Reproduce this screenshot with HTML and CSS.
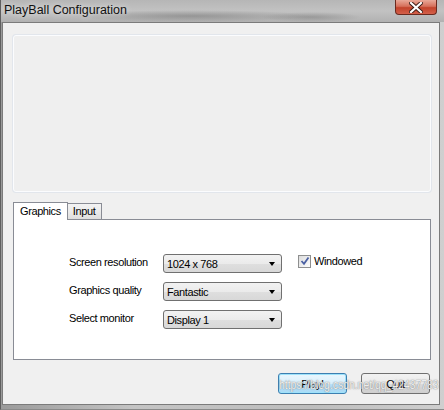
FILE: index.html
```html
<!DOCTYPE html>
<html lang="en">
<head>
  <meta charset="UTF-8" />
  <title>PlayBall Configuration</title>
  <link rel="stylesheet" href="styles.css">
</head>
<body>
  <div class="window">
    <div class="titlebar">
      <span class="title">PlayBall Configuration</span>
      <div class="close-btn">
        <svg width="14" height="11" viewBox="0 0 14 11">
          <path d="M2 1 L12 10 M12 1 L2 10" stroke="#3a1a14" stroke-width="4" stroke-linecap="square"/>
          <path d="M2 1 L12 10 M12 1 L2 10" stroke="#ffffff" stroke-width="2.2" stroke-linecap="square"/>
        </svg>
      </div>
    </div>

    <div class="client">
      <!-- banner picture area (empty) -->
      <div class="banner"></div>

      <div class="tabs">
        <div class="tab active">Graphics</div>
        <div class="tab">Input</div>
      </div>

      <div class="tab-panel">
        <div class="settings">
          <div class="row">
            <span class="label">Screen resolution</span>
            <div class="combo"><span>1024 x 768</span><i class="arrow"></i></div>
            <label class="check">
              <span class="box">
                <svg width="10" height="10" viewBox="0 0 10 10">
                  <path d="M1.5 5 L4 7.8 L8.5 1.5" fill="none" stroke="#4b61a3" stroke-width="1.8"/>
                </svg>
              </span>
              Windowed
            </label>
          </div>
          <div class="row">
            <span class="label">Graphics quality</span>
            <div class="combo"><span>Fantastic</span><i class="arrow"></i></div>
          </div>
          <div class="row">
            <span class="label">Select monitor</span>
            <div class="combo"><span>Display 1</span><i class="arrow"></i></div>
          </div>
        </div>
      </div>

      <div class="buttons">
        <button class="btn default">Play!</button>
        <button class="btn">Quit</button>
      </div>
    </div>

    <div class="watermark">https://blog.csdn.net/qq_42437783</div>
  </div>
</body>
</html>
```

FILE: styles.css
```css
body {
  margin: 0;
  background: #b8b8b8;
  font-family: 'Liberation Sans', Arial, sans-serif;
  font-size: 11px;
  letter-spacing: -0.4px;
  color: #000;
}
.window {
  position: relative;
  width: 444px;
  height: 410px;
  box-sizing: border-box;
  background: linear-gradient(90deg, #9a9a9a 0, #c4c4c4 30%, #bdbdbd 70%, #cfcfcf 100%);
  border-left: 1px solid #5f5f5f;
  border-bottom: 1px solid #8a8a8a;
  padding: 0 4px 4px 1px;
  display: flex;
  flex-direction: column;
  overflow: hidden;
}
.titlebar {
  height: 22px;
  display: flex;
  align-items: flex-start;
  justify-content: space-between;
  background:
    radial-gradient(ellipse 120px 6px at 190px 16px, rgba(80, 80, 80, 0.35), transparent),
    radial-gradient(ellipse 50px 5px at 310px 17px, rgba(80, 80, 80, 0.3), transparent),
    linear-gradient(180deg, #b6b6b6 0, #c2c2c2 50%, #b1b1b1 100%);
  margin: 0 -4px 0 -1px;
  padding: 0 7px 0 3px;
}
.title {
  font-size: 12.5px;
  letter-spacing: 0;
  line-height: 20px;
  color: #111;
  text-shadow: 0 0 6px rgba(255, 255, 255, 0.8);
}
.close-btn {
  width: 40px;
  height: 14px;
  border: 1px solid #6a2a1f;
  border-top: none;
  border-radius: 0 0 4px 4px;
  background: linear-gradient(180deg, #e9a898 0, #d6705b 45%, #c2432b 55%, #d4604a 100%);
  display: flex;
  align-items: center;
  justify-content: center;
}
.client {
  flex: 1;
  background: #f0f0f0;
  border: 1px solid #7b7b7b;
  padding: 12px 8px 0 10px;
  display: flex;
  flex-direction: column;
}
.banner {
  height: 155px;
  background: #efefef;
  border: 1px solid #fbfcfe;
  border-radius: 3px;
  box-shadow: 0 0 0 1px #e2e6ec;
}
.tabs {
  display: flex;
  align-items: flex-end;
  height: 17px;
  margin-top: 10px;
}
.tab {
  height: 15px;
  line-height: 15px;
  padding: 0 6px 0 5px;
  border: 1px solid #898c95;
  border-bottom: none;
  background: linear-gradient(180deg, #f3f3f3 0, #ebebeb 50%, #dedede 100%);
}
.tab.active {
  height: 17px;
  line-height: 16px;
  background: #fff;
  padding: 0 6px;
  position: relative;
  z-index: 1;
  margin-bottom: -1px;
}
.tab.active + .tab {
  border-left: none;
}
.tab-panel {
  height: 141px;
  background: #fff;
  border: 1px solid #898c95;
  box-sizing: border-box;
  padding: 34px 0 0 55px;
}
.settings {
  display: flex;
  flex-direction: column;
  gap: 9px;
}
.row {
  display: flex;
  align-items: center;
}
.label {
  width: 94px;
  margin-top: -3px;
}
.combo {
  width: 108px;
  height: 17px;
  border: 1px solid #707070;
  border-radius: 3px;
  background: linear-gradient(180deg, #f2f2f2 0, #ebebeb 50%, #dfdfdf 51%, #d8d8d8 100%);
  display: flex;
  align-items: center;
  justify-content: space-between;
  padding: 0 6px 0 3px;
  box-sizing: content-box;
}
.arrow {
  width: 0;
  height: 0;
  border-left: 3.5px solid transparent;
  border-right: 3.5px solid transparent;
  border-top: 4px solid #000;
}
.check {
  display: flex;
  align-items: center;
  gap: 3px;
  margin-left: 16px;
  margin-top: -5px;
}
.box {
  width: 11px;
  height: 11px;
  border: 1px solid #8e8f8f;
  background: linear-gradient(135deg, #dcdcdc, #fdfdfd);
  display: flex;
  align-items: center;
  justify-content: center;
}
.buttons {
  display: flex;
  justify-content: flex-end;
  gap: 14px;
  margin-top: 13px;
  padding-right: 1px;
}
.btn {
  width: 69px;
  height: 21px;
  font-family: inherit;
  font-size: 11px;
  letter-spacing: inherit;
  border: 1px solid #707070;
  border-radius: 3px;
  background: linear-gradient(180deg, #f2f2f2 0, #ebebeb 50%, #dddddd 51%, #cfcfcf 100%);
  padding: 0;
  color: #000;
}
.btn.default {
  border-color: #3c7fb1;
  box-shadow: inset 0 0 0 1px #9ee2fa;
  background: linear-gradient(180deg, #eaf6fd 0, #d9f0fc 50%, #bee6fd 51%, #a7d9f5 100%);
}
/* blog watermark stamped over the lower right corner */
.watermark {
  position: absolute;
  left: 278px;
  top: 377px;
  font-size: 13px;
  letter-spacing: 0;
  transform: scaleX(0.8);
  transform-origin: left center;
  color: rgba(255, 255, 255, 0.85);
  text-shadow: 0 0 1px #808080, 0 0 2px rgba(120, 120, 120, 0.6);
  white-space: nowrap;
}
```
